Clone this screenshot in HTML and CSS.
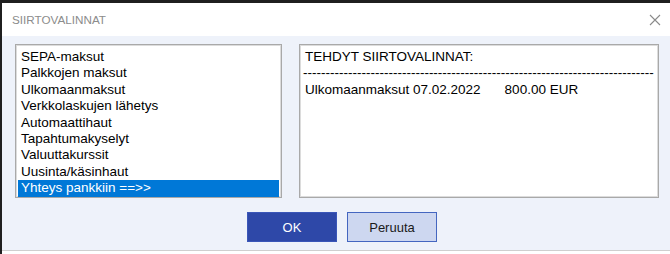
FILE: index.html
```html
<!DOCTYPE html>
<html>
<head>
<meta charset="utf-8">
<link rel="stylesheet" href="styles.css">
</head>
<body>
<div class="window">
  <div class="titlebar">
    <span class="title">SIIRTOVALINNAT</span>
    <svg class="close" width="12" height="12" viewBox="0 0 12 12"><path d="M1 1L11 11M11 1L1 11" stroke="#8a8a8a" stroke-width="1.1" fill="none"/></svg>
  </div>
  <div class="content">
    <div class="panes">
      <ul class="listbox">
        <li>SEPA-maksut</li>
        <li>Palkkojen maksut</li>
        <li>Ulkomaanmaksut</li>
        <li>Verkkolaskujen lähetys</li>
        <li>Automaattihaut</li>
        <li>Tapahtumakyselyt</li>
        <li>Valuuttakurssit</li>
        <li>Uusinta/käsinhaut</li>
        <li class="selected">Yhteys pankkiin ==&gt;&gt;</li>
      </ul>
      <div class="summary">
        <div class="line">TEHDYT SIIRTOVALINNAT:</div>
        <div class="line dashes">------------------------------------------------------------------------------</div>
        <div class="line">Ulkomaanmaksut 07.02.2022<span class="amount">800.00 EUR</span></div>
      </div>
    </div>
    <div class="buttons">
      <button class="btn primary">OK</button>
      <button class="btn secondary">Peruuta</button>
    </div>
  </div>
  <div class="bottom"></div>
</div>
</body>
</html>
```
FILE: styles.css
```css
html, body {
  margin: 0;
  padding: 0;
}
body {
  background: #1f1f1f;
  width: 670px;
  height: 254px;
  overflow: hidden;
  font-family: "Liberation Sans", Arial, sans-serif;
}
.window {
  margin-top: 3px;
  margin-left: 2px;
  background: #ffffff;
  height: 251px;
  display: flex;
  flex-direction: column;
}
.titlebar {
  height: 33px;
  background: #ffffff;
  display: flex;
  align-items: center;
  justify-content: space-between;
  padding: 0 9px 0 10px;
}
.title {
  font-size: 11.7px;
  color: #8c8c8c;
}
.close {
  display: block;
}
.content {
  background: #eef2fa;
  height: 214px;
  padding-top: 8px;
  box-sizing: border-box;
  display: flex;
  flex-direction: column;
}
.panes {
  display: flex;
  gap: 17px;
  padding-left: 13px;
}
.listbox, .summary {
  margin: 0;
  background: #ffffff;
  border: 1px solid #a9a9a9;
  box-shadow: inset 0 0 0 1px #dcdcdc;
  height: 154px;
  box-sizing: border-box;
  padding: 4px 2px 0 2px;
  font-size: 13.5px;
  line-height: 16.4px;
  color: #000000;
}
.listbox {
  width: 267px;
  list-style: none;
}
.listbox li {
  padding-left: 3px;
  white-space: nowrap;
}
.listbox li.selected {
  background: #0078d7;
  color: #ffffff;
}
.summary {
  width: 360px;
  overflow: hidden;
}
.summary .line {
  padding-left: 3px;
  white-space: nowrap;
}
.summary .dashes {
  padding-left: 1px;
}
.amount {
  margin-left: 24px;
}
.bottom {
  flex: 1;
  border-top: 1px solid #cfcfcf;
  background: #ffffff;
}
.buttons {
  display: flex;
  justify-content: center;
  gap: 10px;
  margin-top: 14px;
  padding-left: 12px;
}
.btn {
  width: 90px;
  height: 30px;
  font-family: "Liberation Sans", Arial, sans-serif;
  font-size: 13px;
  box-sizing: border-box;
  padding: 0;
}
.primary {
  background: #2e48a8;
  border: 1px solid #3a56b8;
  color: #ffffff;
}
.secondary {
  background: #cdd7f0;
  border: 1px solid #4466c0;
  color: #1a1a1a;
}
```
